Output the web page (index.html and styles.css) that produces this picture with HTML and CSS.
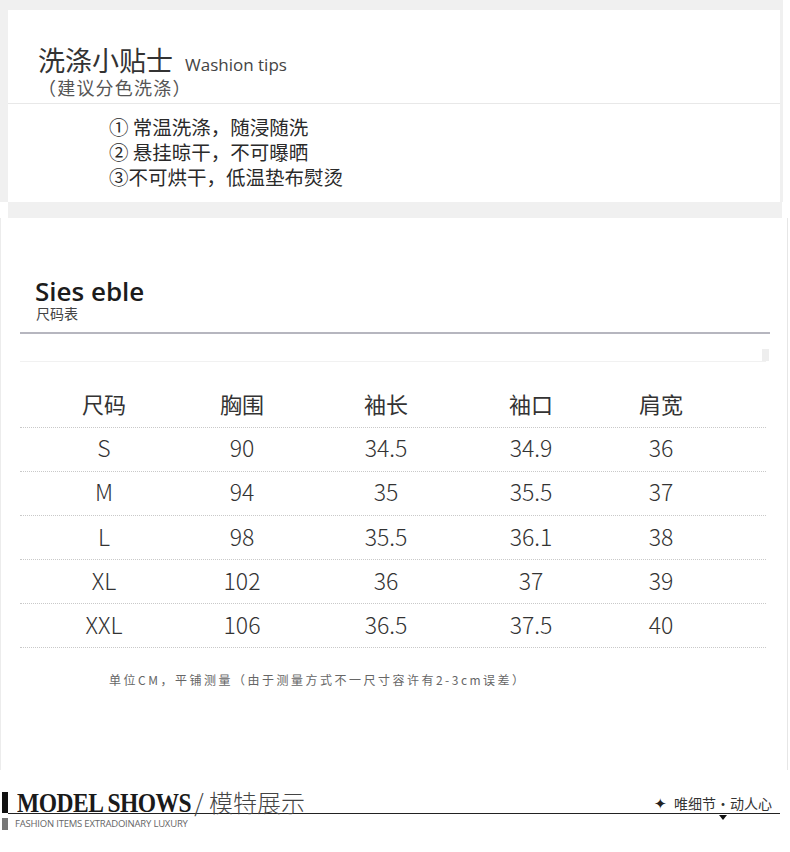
FILE: index.html
```html
<!DOCTYPE html>
<html lang="zh-CN">
<head>
<meta charset="utf-8">
<title>洗涤小贴士 / 尺码表</title>
<link rel="stylesheet" href="styles.css">
</head>
<body>
<div class="wash-wrap">
  <div class="wash-card">
    <div class="wash-head">
      <h2 class="wash-title"><span class="wash-zh">洗涤小贴士</span><span class="wash-en">Washion tips</span></h2>
      <p class="wash-sub">（建议分色洗涤）</p>
    </div>
    <ul class="wash-list">
      <li>① 常温洗涤，随浸随洗</li>
      <li>② 悬挂晾干，不可曝晒</li>
      <li>③不可烘干，低温垫布熨烫</li>
    </ul>
  </div>
</div>
<div class="wash-band"></div>

<section class="size">
  <h2 class="size-title">Sies eble</h2>
  <p class="size-sub">尺码表</p>
  <div class="size-rule"></div>
  <div class="size-subrule"><span class="size-tab"></span></div>
  <div class="size-table">
    <div class="row head"><span>尺码</span><span>胸围</span><span>袖长</span><span>袖口</span><span>肩宽</span></div>
    <div class="row"><span>S</span><span>90</span><span>34.5</span><span>34.9</span><span>36</span></div>
    <div class="row"><span>M</span><span>94</span><span>35</span><span>35.5</span><span>37</span></div>
    <div class="row"><span>L</span><span>98</span><span>35.5</span><span>36.1</span><span>38</span></div>
    <div class="row"><span>XL</span><span>102</span><span>36</span><span>37</span><span>39</span></div>
    <div class="row"><span>XXL</span><span>106</span><span>36.5</span><span>37.5</span><span>40</span></div>
  </div>
  <p class="size-note">单位CM，平铺测量（由于测量方式不一尺寸容许有2-3cm误差）</p>
</section>

<section class="model">
  <div class="model-head">
    <span class="model-bar"></span>
    <div class="model-line">
      <h2 class="model-title"><span class="model-en">MODEL SHOWS</span><span class="model-zh">/ 模特展示</span></h2>
      <span class="model-slogan"><span class="star">✦</span>唯细节<span class="dot">・</span>动人心</span>
    </div>
  </div>
  <div class="model-sub">
    <span class="model-square"></span>
    <span class="model-tag">FASHION ITEMS EXTRADOINARY LUXURY</span>
  </div>
</section>
</body>
</html>
```

FILE: styles.css
```css
* { box-sizing: border-box; }
html, body { margin: 0; padding: 0; background: #fff; }
body {
  width: 790px;
  font-family: "Noto Sans CJK SC", "Open Sans", sans-serif;
  color: #333;
}
h2, p, ul { margin: 0; padding: 0; font-weight: normal; }

/* ---------- wash tips ---------- */
.wash-wrap {
  background: #f0f0f0;
  padding: 10px 3px 0 8px;
  margin-right: 7px;
}
.wash-card {
  background: #fff;
  height: 192px;
}
.wash-band {
  height: 16px;
  margin: 0 8px 0 8px;
  background: #f0f0f0;
}
.wash-head {
  padding: 34px 0 0 30px;
  height: 94px;
  border-bottom: 1px solid #e8e8e8;
}
.wash-title {
  display: flex;
  align-items: baseline;
  height: 31px;
  line-height: 31px;
}
.wash-zh {
  font-size: 27px;
  color: #333;
  font-weight: 400;
}
.wash-en {
  font-family: "Open Sans", sans-serif;
  font-size: 17px;
  color: #444;
  margin-left: 12px;
}
.wash-sub {
  font-size: 18px;
  line-height: 24px;
  letter-spacing: 1.2px;
  color: #555;
}
.wash-list {
  list-style: none;
  padding: 10px 0 0 101px;
  font-size: 19.5px;
  line-height: 25px;
  color: #2a2a2a;
}
.wash-list li { height: 25px; }

/* ---------- size chart ---------- */
.size {
  height: 552px;
  margin-right: 2px;
  border-left: 1px solid #ececec;
  border-right: 1px solid #e6e6e6;
  padding-top: 58px;
}
.size-title {
  font-family: "Open Sans", sans-serif;
  font-weight: 600;
  font-size: 26px;
  line-height: 30px;
  color: #1c1c1c;
  padding-left: 34px;
}
.size-sub {
  font-size: 14px;
  line-height: 14px;
  color: #444;
  padding-left: 35px;
}
.size-rule {
  margin: 12px 0 0 19px;
  width: 750px;
  height: 2px;
  background: #b6b6bf;
}
.size-subrule {
  margin-left: 19px;
  width: 746px;
  height: 28px;
  border-bottom: 1px solid #f1f1f1;
  display: flex;
  justify-content: flex-end;
  align-items: flex-end;
}
.size-tab {
  width: 7px;
  height: 12px;
  background: #eeeeee;
  margin-right: -3px;
}
.size-table {
  margin: 22px 0 0 19px;
  width: 746px;
}
.row {
  display: grid;
  grid-template-columns: 168px 108px 180px 110px 150px 1fr;
  height: 44px;
  padding-top: 5px;
  border-bottom: 1px dotted #c9c9c9;
  font-size: 23px;
  line-height: 29px;
  font-weight: 300;
  color: #333;
  text-align: center;
}
.row.head { font-weight: 400; font-size: 22px; }
.row:nth-child(n+4) { padding-top: 6px; }
.size-note {
  margin: 24px 0 0 108px;
  font-size: 12px;
  line-height: 16px;
  letter-spacing: 2.5px;
  color: #666;
}

/* ---------- model shows ---------- */
.model {
  padding-top: 21px;
}
.model-head {
  display: flex;
  align-items: flex-end;
  margin: 0 10px 0 2px;
}
.model-bar {
  width: 6px;
  height: 21px;
  background: #111;
  flex: none;
  margin-bottom: 1px;
}
.model-line {
  flex: 1;
  display: flex;
  justify-content: space-between;
  align-items: flex-end;
  border-bottom: 1px solid #222;
  padding-left: 9px;
}
.model-title {
  display: flex;
  align-items: baseline;
  line-height: 22px;
  height: 22px;
}
.model-en {
  display: inline-block;
  font-family: "Liberation Serif", serif;
  font-weight: 700;
  font-size: 28px;
  letter-spacing: -0.6px;
  color: #1a1a1a;
  transform: scaleX(0.84);
  transform-origin: left bottom;
  margin-right: -33px;
}
.model-zh {
  font-size: 24px;
  font-weight: 300;
  color: #444;
  margin-left: 3px;
}
.model-slogan {
  font-size: 14px;
  line-height: 18px;
  color: #333;
  padding-bottom: 1px;
  margin-right: 8px;
}
.star { font-size: 15px; color: #222; margin-right: 7px; }
.dot { position: relative; }
.dot::after {
  content: "";
  position: absolute;
  left: 50%;
  margin-left: -4px;
  top: calc(100% + 2px);
  border-left: 4px solid transparent;
  border-right: 4px solid transparent;
  border-top: 5px solid #111;
}
.model-sub {
  display: flex;
  align-items: center;
  gap: 7px;
  margin: 4px 0 0 2px;
}
.model-square {
  width: 6px;
  height: 12px;
  background: #777;
}
.model-tag {
  font-family: "Open Sans", sans-serif;
  font-size: 9.5px;
  line-height: 12px;
  letter-spacing: -0.2px;
  color: #666;
}
```
